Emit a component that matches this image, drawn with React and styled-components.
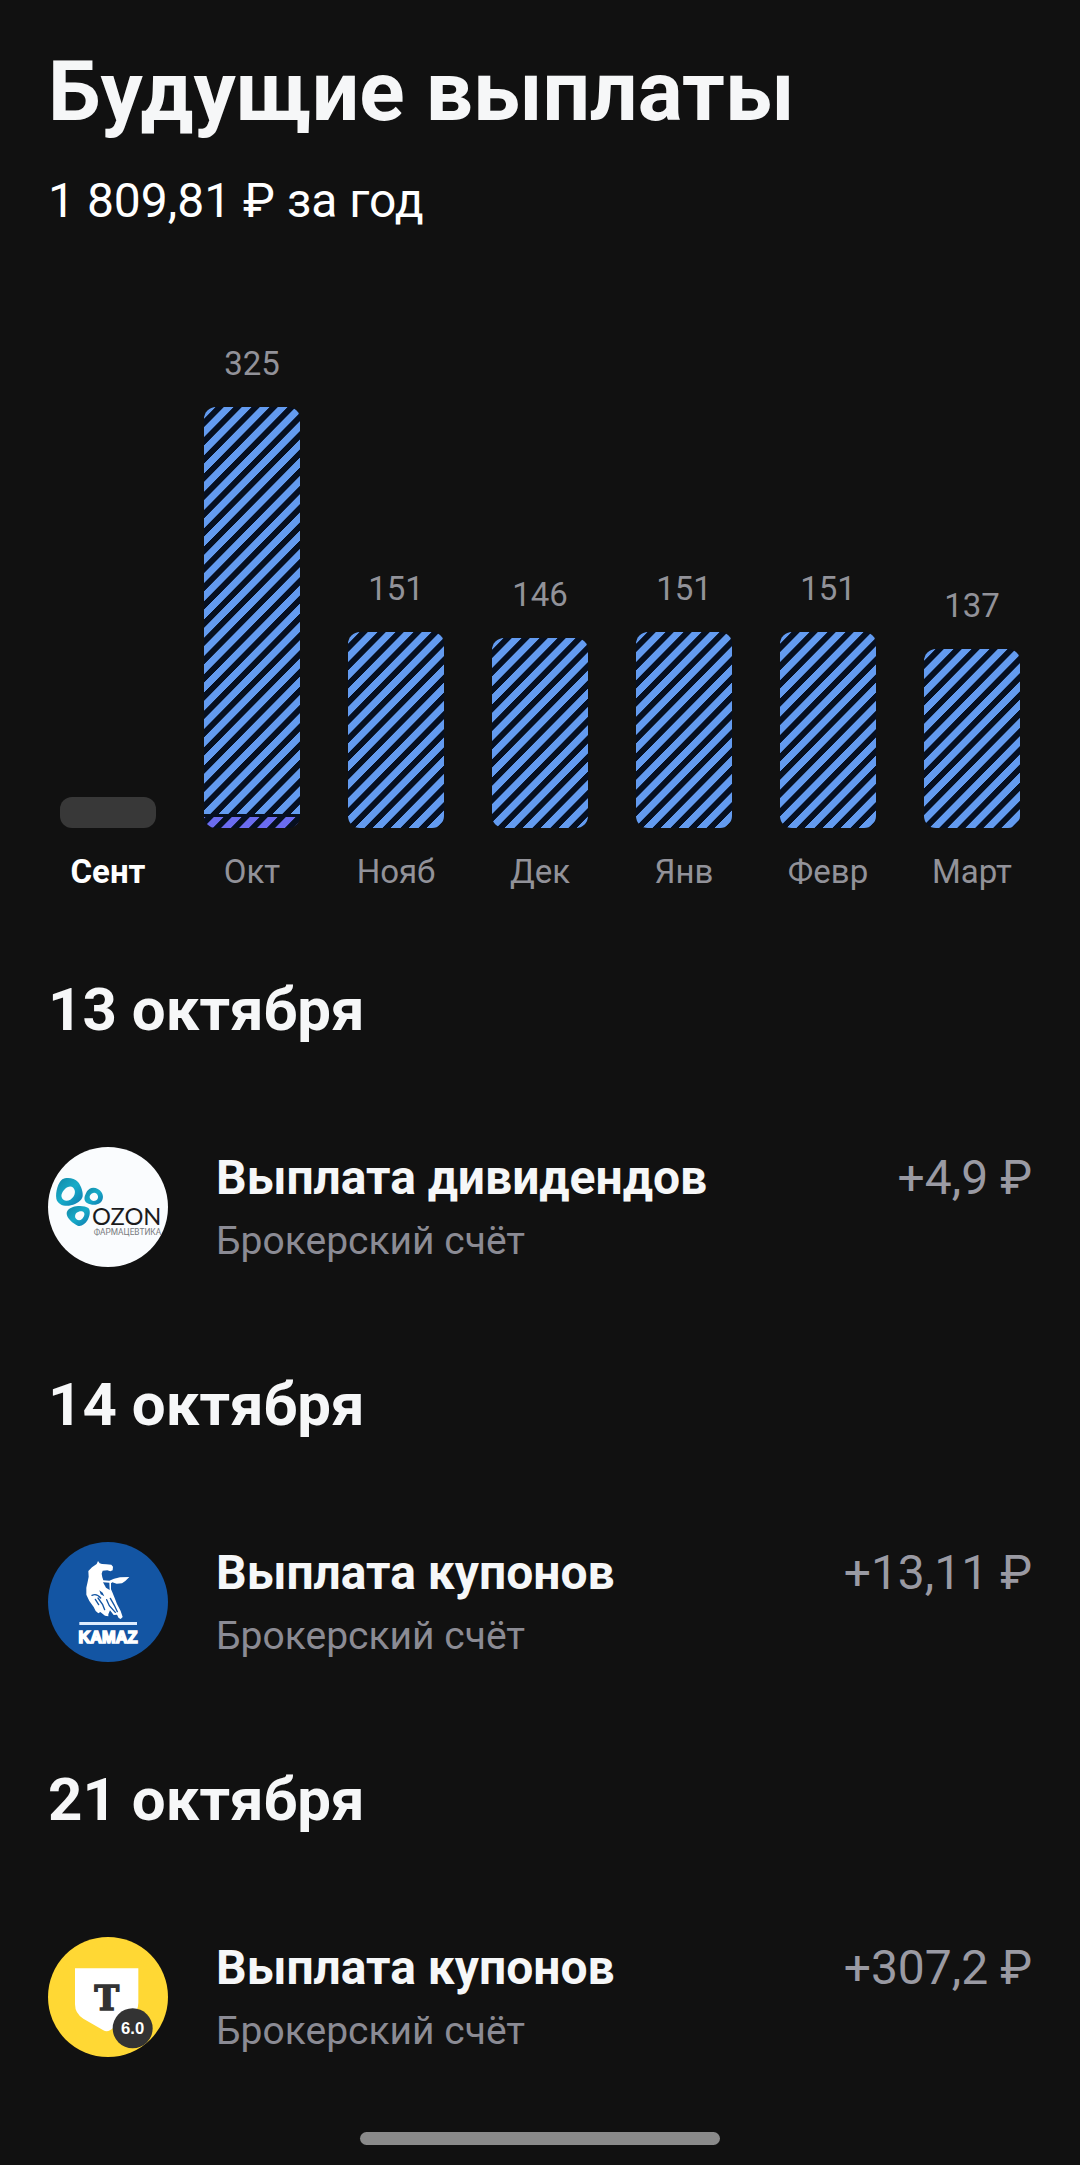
import React from "react";
import styled, { createGlobalStyle } from "styled-components";

const GlobalStyle = createGlobalStyle`
  * {
    box-sizing: border-box;
  }

  body {
    margin: 0;
    background-color: #111111;
    color: #f6f7f8;
    font-family: Roboto, "Noto Sans", sans-serif;
  }
`;

const Page = styled.main`
  display: flex;
  flex-direction: column;
  min-height: 100vh;
  padding: 43px 48px 20px;
`;

const Title = styled.h1`
  margin: 0 0 32px;
  font-size: 84px;
  font-weight: 700;
  line-height: 98px;
`;

const Total = styled.p`
  margin: 0;
  color: #ffffff;
  font-size: 48px;
  line-height: 56px;
`;

const Chart = styled.ul`
  display: flex;
  align-items: flex-end;
  gap: 48px;
  margin: 115px 0 84px;
  padding: 0 12px;
  list-style: none;
`;

const Column = styled.li`
  flex: 1;
  display: flex;
  flex-direction: column;
  align-items: center;
  gap: 24px;
  min-width: 0;
`;

const ChartText = styled.span`
  color: ${props => (props.$active ? "#ffffff" : "#929299")};
  font-size: 33px;
  font-weight: ${props => (props.$active ? 700 : 400)};
  line-height: 39px;
  white-space: nowrap;
`;

const EmptyBar = styled.div`
  width: 100%;
  height: 31px;
  border-radius: 12px;
  background-color: #383838;
`;

const Bar = styled.div`
  display: flex;
  flex-direction: column;
  gap: 3px;
  width: 100%;
  border-radius: 12px;
  background-color: #060f20;
  overflow: hidden;
`;

const Segment = styled.div`
  background-image: repeating-linear-gradient(
    to bottom right,
    transparent 0%,
    transparent 1%,
    ${props => props.$color} 1.6%,
    ${props => props.$color} 7.8%,
    transparent 8.4%,
    transparent 12.5%
  );
  background-position: ${props => props.$shift || 0}px 0;
  background-size: 72px 73px;
`;

const Day = styled.section`
  margin-bottom: 103px;

  &:last-of-type {
    margin-bottom: 75px;
  }
`;

const DayTitle = styled.h2`
  margin: 0 0 102px;
  font-size: 60px;
  font-weight: 700;
  line-height: 70px;
`;

const Payment = styled.div`
  display: flex;
  align-items: center;
  gap: 48px;
`;

const Logo = styled.svg`
  flex: none;
  width: 120px;
  height: 120px;
`;

const Info = styled.div`
  flex: 1;
  display: flex;
  flex-direction: column;
  gap: 12px;
`;

const Line = styled.div`
  display: flex;
  justify-content: space-between;
  gap: 24px;
  font-size: 48px;
  line-height: 56px;
`;

const Name = styled.h3`
  margin: 0;
  font-size: 48px;
  font-weight: 700;
`;

const Amount = styled.span`
  color: #9a9aa3;
  white-space: nowrap;
`;

const Account = styled.span`
  color: #8b8b94;
  font-size: 39px;
  line-height: 46px;
`;

const HomeIndicator = styled.div`
  align-self: center;
  width: 360px;
  height: 13px;
  margin-top: auto;
  border-radius: 7px;
  background-color: #8a8a8a;
`;

const OzonLogo = () => (
  <Logo viewBox="0 0 360 360" role="img" aria-label="Ozon Фармацевтика">
    <defs>
      <linearGradient id="ozonBlob" x1="0" y1="0" x2="1" y2="1">
        <stop offset="0" stopColor="#1486a6" />
        <stop offset="0.5" stopColor="#17acc9" />
        <stop offset="1" stopColor="#1079ae" />
      </linearGradient>
    </defs>
    <circle cx="180" cy="180" r="180" fill="#fafcfe" />
    <g fill="url(#ozonBlob)" fillRule="evenodd">
      <path d="M43 97C55 90 79 92 90 105C100 117 106 137 104 148C101 162 86 171 69 175C50 180 29 173 25 155C22 136 30 106 43 97ZM58 121C47 127 38 141 41 151C44 162 57 164 67 158C77 152 83 140 80 130C77 119 68 116 58 121Z" />
      <path d="M125 125C137 118 153 125 160 135C168 146 166 160 156 168C145 176 128 174 117 168C108 162 108 151 112 143C115 135 118 129 125 125ZM136 138C128 140 122 148 127 156C132 164 143 163 148 157C154 150 147 135 136 138Z" />
      <path d="M75 180C89 175 112 176 121 183C128 190 126 206 119 219C111 232 99 240 89 236C76 231 55 213 56 199C57 188 66 184 75 180ZM92 194C82 197 79 206 83 214C87 221 96 222 102 216C108 210 112 202 107 196C104 192 98 192 92 194Z" />
    </g>
    <text x="132" y="235" fill="#1b1b1d" fontFamily="Lato, sans-serif" fontSize="71">
      OZON
    </text>
    <text x="137" y="265" fill="#77797d" fontFamily="Roboto, sans-serif" fontSize="25">
      ФАРМАЦЕВТИКА
    </text>
  </Logo>
);

const KamazLogo = () => (
  <Logo viewBox="0 0 360 360" role="img" aria-label="Kamaz">
    <circle cx="180" cy="180" r="180" fill="#1355a3" />
    <path
      fill="#ffffff"
      d="M146 66L150 57L155 64L162 66L175 67L190 68L195 74L194 85L187 88L178 85L164 86L161 95L163 106L166 115L184 116L198 110L216 106L244 105L232 117L222 124L206 125L193 121L189 124L189 142L193 151L200 168L207 186L218 207L224 225L218 231L212 228L207 218L197 219L186 205L181 217L181 223L171 221L157 210L151 214L143 207L137 195L124 177L115 158L115 137L119 119L122 104L121 87L132 76Z"
    />
    <path
      fill="none"
      stroke="#1355a3"
      strokeWidth="4"
      strokeLinecap="round"
      d="M132 160Q146 153 158 168M142 172L152 188M150 168L164 188L170 203M176 173L184 191L202 211M187 169L199 190L208 209"
    />
    <path fill="#1355a3" d="M165 121L184 122L185 144L174 137ZM154 145L164 152L169 163L158 157Z" />
    <rect x="94" y="240" width="173" height="9" fill="#dcecff" />
    <text
      x="180"
      y="303"
      fill="#ffffff"
      stroke="#ffffff"
      strokeWidth="5"
      fontFamily="'Liberation Sans', sans-serif"
      fontSize="49"
      fontWeight="700"
      textAnchor="middle"
    >
      KAMAZ
    </text>
  </Logo>
);

const TBankLogo = () => (
  <Logo viewBox="0 0 360 360" role="img" aria-label="Т-Банк">
    <circle cx="180" cy="180" r="180" fill="#ffd834" />
    <path
      fill="#ffffff"
      d="M81 94H271V198Q271 226 246 241L186 280Q176 286 166 280L106 245Q81 230 81 202Z"
    />
    <text
      x="176"
      y="220"
      fill="#333333"
      stroke="#333333"
      strokeWidth="5"
      fontFamily="'DejaVu Serif', serif"
      fontSize="99"
      fontWeight="700"
      textAnchor="middle"
    >
      T
    </text>
    <circle cx="254" cy="274" r="60" fill="#333333" />
    <text
      x="254"
      y="291"
      fill="#ffffff"
      fontFamily="'Liberation Sans', sans-serif"
      fontSize="50"
      fontWeight="700"
      textAnchor="middle"
    >
      6.0
    </text>
  </Logo>
);

const BLUE = "#639bf0";
const VIOLET = "#6b6cf0";

const months = [
  { name: "Сент", active: true },
  {
    name: "Окт",
    value: 325,
    segments: [{ height: 407, color: BLUE }, { height: 11, color: VIOLET, shift: 8 }]
  },
  { name: "Нояб", value: 151, segments: [{ height: 196, color: BLUE }] },
  { name: "Дек", value: 146, segments: [{ height: 190, color: BLUE }] },
  { name: "Янв", value: 151, segments: [{ height: 196, color: BLUE }] },
  { name: "Февр", value: 151, segments: [{ height: 196, color: BLUE }] },
  { name: "Март", value: 137, segments: [{ height: 179, color: BLUE }] }
];

const payments = [
  { date: "13 октября", name: "Выплата дивидендов", amount: "+4,9 ₽", Icon: OzonLogo },
  { date: "14 октября", name: "Выплата купонов", amount: "+13,11 ₽", Icon: KamazLogo },
  { date: "21 октября", name: "Выплата купонов", amount: "+307,2 ₽", Icon: TBankLogo }
];

const App = () => (
  <>
    <GlobalStyle />
    <Page>
      <Title>Будущие выплаты</Title>
      <Total>1 809,81 ₽ за год</Total>
      <Chart>
        {months.map(month => (
          <Column key={month.name}>
            {month.segments ? (
              <>
                <ChartText>{month.value}</ChartText>
                <Bar>
                  {month.segments.map(segment => (
                    <Segment
                      key={segment.color}
                      $color={segment.color}
                      $shift={segment.shift}
                      style={{ height: segment.height }}
                    />
                  ))}
                </Bar>
              </>
            ) : (
              <EmptyBar />
            )}
            <ChartText $active={month.active}>{month.name}</ChartText>
          </Column>
        ))}
      </Chart>
      {payments.map(({ date, name, amount, Icon }) => (
        <Day key={date}>
          <DayTitle>{date}</DayTitle>
          <Payment>
            <Icon />
            <Info>
              <Line>
                <Name>{name}</Name>
                <Amount>{amount}</Amount>
              </Line>
              <Account>Брокерский счёт</Account>
            </Info>
          </Payment>
        </Day>
      ))}
      <HomeIndicator />
    </Page>
  </>
);

export default App;
